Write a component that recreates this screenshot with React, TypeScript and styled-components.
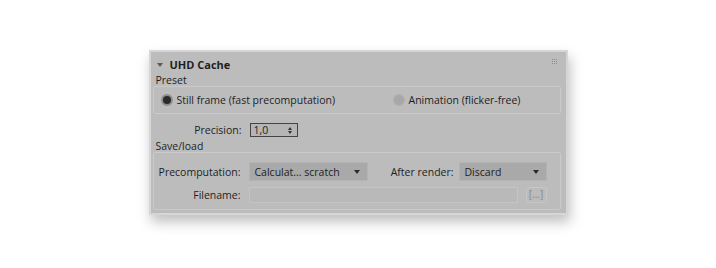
import React from "react";
import styled, { createGlobalStyle } from "styled-components";

const GlobalStyle = createGlobalStyle`
  html, body {
    margin: 0;
    padding: 0;
    background: #ffffff;
  }
  body {
    font-family: "Open Sans", "DejaVu Sans", sans-serif;
    font-size: 10.5px;
    color: #1e1e1e;
  }
`;

const Page = styled.div`
  display: flex;
  justify-content: center;
  padding-top: 50px;
  height: 268px;
  box-sizing: border-box;
`;

const Panel = styled.div`
  width: 419px;
  height: 165px;
  box-sizing: border-box;
  background: #bcbcbc;
  border: 2px solid #d6d6d6;
  box-shadow: 2px 7px 12px rgba(0, 0, 0, 0.25);
  padding: 3px 3px 2px 2px;
  display: flex;
  flex-direction: column;
`;

const TitleBar = styled.div`
  display: flex;
  align-items: center;
  height: 19px;
  padding-left: 4px;
  font-weight: 700;
  font-size: 11px;
`;

const Caret = styled.span`
  width: 0;
  height: 0;
  border-left: 3px solid transparent;
  border-right: 3px solid transparent;
  border-top: 4px solid #5a5a5a;
  margin-right: 7px;
`;

const Title = styled.span`
  flex: 1;
`;

const Grip = styled.svg`
  margin-right: 5px;
  margin-top: -5px;
`;

const GroupLabel = styled.div<{ $top?: number }>`
  padding-left: 3px;
  height: 12px;
  line-height: 12px;
  margin-top: ${(p) => p.$top ?? 0}px;
`;

const Group = styled.div<{ $h: number }>`
  height: ${(p) => p.$h}px;
  box-sizing: border-box;
  border: 1px solid #cacaca;
  border-radius: 2px;
  margin: 0 2px 0 0;
  display: flex;
  flex-direction: column;
`;

const RadioRow = styled.div`
  display: flex;
  align-items: center;
  height: 100%;
  padding-left: 7px;
`;

const RadioItem = styled.label<{ $w?: number }>`
  display: flex;
  align-items: center;
  gap: 4px;
  width: ${(p) => (p.$w ? `${p.$w}px` : "auto")};
`;

const RadioDot = styled.span<{ $on?: boolean }>`
  width: 12px;
  height: 12px;
  border-radius: 50%;
  box-sizing: border-box;
  background: ${(p) => (p.$on ? "#2b2b2b" : "#a8a8a8")};
  border: ${(p) => (p.$on ? "2px solid #8e8e8e" : "1px solid #b2b2b2")};
`;

const FieldRow = styled.div<{ $top?: number }>`
  display: flex;
  align-items: center;
  margin-top: ${(p) => p.$top ?? 0}px;
`;

const FieldLabel = styled.span<{ $w: number; $gap?: number }>`
  width: ${(p) => p.$w}px;
  text-align: right;
  padding-right: ${(p) => p.$gap ?? 8}px;
  box-sizing: border-box;
`;

const Spinner = styled.div`
  width: 48px;
  height: 14px;
  box-sizing: border-box;
  border: 1px solid #444444;
  background: #b5b5b5;
  display: flex;
  align-items: center;
  justify-content: space-between;
  padding: 0 5px 0 3px;
  line-height: 12px;
`;

const SpinArrows = styled.span`
  display: flex;
  flex-direction: column;
  gap: 1px;
  &::before, &::after {
    content: "";
    width: 0;
    height: 0;
    border-left: 2.5px solid transparent;
    border-right: 2.5px solid transparent;
  }
  &::before {
    border-bottom: 3px solid #333;
  }
  &::after {
    border-top: 3px solid #333;
  }
`;

const Select = styled.div<{ $w: number }>`
  width: ${(p) => p.$w}px;
  height: 19px;
  box-sizing: border-box;
  background: #a9a9a9;
  border: 1px solid #b4b4b4;
  display: flex;
  align-items: center;
  justify-content: space-between;
  padding: 0 7px 0 5px;
`;

const SelectArrow = styled.span`
  width: 0;
  height: 0;
  border-left: 3px solid transparent;
  border-right: 3px solid transparent;
  border-top: 4px solid #2a2a2a;
`;

const TextField = styled.div`
  width: 269px;
  height: 16px;
  box-sizing: border-box;
  border: 1px solid #c4c4c4;
  background: #b9b9b9;
`;

const BrowseButton = styled.div`
  margin-left: 8px;
  width: 21px;
  height: 16px;
  box-sizing: border-box;
  border: 1px solid #c6c6c6;
  border-radius: 2px;
  color: #858585;
  font-size: 10px;
  line-height: 13px;
  text-align: center;
`;

const App: React.FC = () => {
  return (
    <>
      <GlobalStyle />
      <Page>
        <Panel>
          <TitleBar>
            <Caret />
            <Title>UHD Cache</Title>
            <Grip width="6" height="6" viewBox="0 0 6 6">
              {[0, 2, 4].map((y) =>
                [0, 2, 4].map((x) => (
                  <rect key={`${x}-${y}`} x={x} y={y} width="1" height="1" fill="#8c8c8c" />
                ))
              )}
            </Grip>
          </TitleBar>
          <GroupLabel>Preset</GroupLabel>
          <Group $h={28}>
            <RadioRow>
              <RadioItem $w={232}>
                <RadioDot $on />
                Still frame (fast precomputation)
              </RadioItem>
              <RadioItem>
                <RadioDot />
                Animation (flicker-free)
              </RadioItem>
            </RadioRow>
          </Group>
          <FieldRow $top={9}>
            <FieldLabel $w={97}>Precision:</FieldLabel>
            <Spinner>
              1,0
              <SpinArrows />
            </Spinner>
          </FieldRow>
          <GroupLabel $top={3}>Save/load</GroupLabel>
          <Group $h={58}>
            <FieldRow $top={9}>
              <FieldLabel $w={95}>Precomputation:</FieldLabel>
              <Select $w={119}>
                Calculat... scratch
                <SelectArrow />
              </Select>
              <FieldLabel $w={91} $gap={5}>After render:</FieldLabel>
              <Select $w={88}>
                Discard
                <SelectArrow />
              </Select>
            </FieldRow>
            <FieldRow $top={6}>
              <FieldLabel $w={95}>Filename:</FieldLabel>
              <TextField />
              <BrowseButton>[...]</BrowseButton>
            </FieldRow>
          </Group>
        </Panel>
      </Page>
    </>
  );
};

export default App;
